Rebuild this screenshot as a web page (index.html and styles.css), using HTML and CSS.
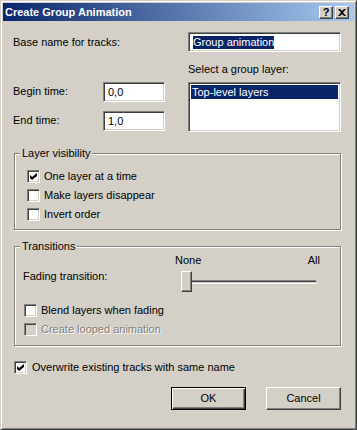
FILE: index.html
```html
<!DOCTYPE html>
<html lang="en">
<head>
  <meta charset="UTF-8">
  <title>Create Group Animation</title>
  <link rel="stylesheet" href="styles.css">
</head>
<body>
  <div class="window">
    <!-- Title bar -->
    <div class="titlebar">
      <span class="title">Create Group Animation</span>
      <div class="title-buttons">
        <span class="tbtn">?</span>
        <span class="tbtn">
          <svg width="8" height="7" viewBox="0 0 8 7"><path d="M0 0h2l2 2 2-2h2L5 3.5 8 7H6L4 5 2 7H0l3-3.5z" fill="#000"/></svg>
        </span>
      </div>
    </div>

    <div class="content">
      <!-- Track name -->
      <div class="name-row">
        <span>Base name for tracks:</span>
        <div class="edit wide"><span class="sel">Group animation</span></div>
      </div>

      <!-- Times and group layer -->
      <div class="middle">
        <div class="times">
          <div class="time-row">
            <span class="time-label">Begin time:</span>
            <div class="edit short">0,0</div>
          </div>
          <div class="time-row">
            <span class="time-label">End time:</span>
            <div class="edit short">1,0</div>
          </div>
        </div>
        <div class="layers">
          <div class="layers-label">Select a group layer:</div>
          <div class="listbox">
            <div class="list-item selected">Top-level layers</div>
          </div>
        </div>
      </div>

      <!-- Layer visibility -->
      <div class="group visibility">
        <span class="group-title">Layer visibility</span>
        <div class="check-row"><span class="check"><svg width="7" height="7" viewBox="0 0 7 7"><path d="M0 2l2 2 5-4v3L2 7 0 5z" fill="#000"/></svg></span>One layer at a time</div>
        <div class="check-row"><span class="check"></span>Make layers disappear</div>
        <div class="check-row"><span class="check"></span>Invert order</div>
      </div>

      <!-- Transitions -->
      <div class="group transitions">
        <span class="group-title">Transitions</span>
        <div class="fade">
          <span></span>
          <div class="scale"><span>None</span><span>All</span></div>
          <span class="fade-label">Fading transition:</span>
          <div class="slider">
            <span class="thumb"></span>
            <span class="track"></span>
          </div>
        </div>
        <div class="check-row first"><span class="check"></span>Blend layers when fading</div>
        <div class="check-row disabled"><span class="check"></span>Create looped animation</div>
      </div>

      <div class="check-row overwrite"><span class="check"><svg width="7" height="7" viewBox="0 0 7 7"><path d="M0 2l2 2 5-4v3L2 7 0 5z" fill="#000"/></svg></span>Overwrite existing tracks with same name</div>

      <div class="buttons">
        <span class="btn default">OK</span>
        <span class="btn">Cancel</span>
      </div>
    </div>
  </div>
</body>
</html>
```
FILE: styles.css
```css
body {
  margin: 0;
  font-family: "Liberation Sans", Arial, sans-serif;
  font-size: 11px;
  line-height: 13px;
  color: #000;
  background: #d4d0c8;
}
.window {
  width: 357px;
  height: 430px;
  box-sizing: border-box;
  background: #d4d0c8;
  border: 1px solid;
  border-color: #d4d0c8 #404040 #404040 #d4d0c8;
  box-shadow: inset 1px 1px #fff, inset -1px -1px #808080;
  padding: 2px;
}
.titlebar {
  height: 18px;
  display: flex;
  align-items: center;
  padding: 0 5px 0 2px;
  background: linear-gradient(to right, #0a246a, #a6caf0);
  color: #fff;
}
.title {
  flex: 1;
  font-weight: bold;
}
.title-buttons {
  display: flex;
  gap: 2px;
}
.tbtn {
  width: 14px;
  height: 13px;
  box-sizing: border-box;
  display: flex;
  align-items: center;
  justify-content: center;
  background: #d4d0c8;
  color: #000;
  font-weight: bold;
  font-size: 11px;
  border: 1px solid;
  border-color: #fff #404040 #404040 #fff;
  box-shadow: inset -1px -1px #808080;
}
.content {
  padding: 11px 13px 0 10px;
}
.name-row {
  display: flex;
  align-items: center;
  height: 20px;
}
.edit {
  height: 20px;
  box-sizing: border-box;
  display: flex;
  align-items: center;
  padding-left: 4px;
  background: #fff;
  border: 1px solid;
  border-color: #808080 #fff #fff #808080;
  box-shadow: inset 1px 1px #404040, inset -1px -1px #d4d0c8;
}
.edit.wide {
  width: 153px;
  margin-left: auto;
}
.edit.short {
  width: 62px;
}
.sel {
  background: #0a246a;
  color: #fff;
}
.middle {
  display: flex;
}
.times {
  flex: 1;
  padding-top: 30px;
  display: flex;
  flex-direction: column;
  gap: 9px;
}
.time-row {
  display: flex;
  align-items: center;
}
.time-label {
  width: 90px;
  margin-top: -2px;
}
.layers {
  width: 153px;
  padding-top: 11px;
}
.layers-label {
  margin-bottom: 6px;
}
.listbox {
  height: 50px;
  box-sizing: border-box;
  padding: 2px;
  background: #fff;
  border: 1px solid;
  border-color: #808080 #fff #fff #808080;
  box-shadow: inset 1px 1px #404040, inset -1px -1px #d4d0c8;
}
.list-item {
  height: 14px;
  line-height: 14px;
  padding-left: 1px;
}
.list-item.selected {
  background: #0a246a;
  color: #fff;
}
.group {
  margin: 21px 0 0 1px;
  border: 1px solid #808080;
  box-shadow: inset 1px 1px #fff, 1px 1px #fff;
}
.group-title {
  display: block;
  width: max-content;
  margin-top: -7px;
  padding: 0 2px;
  background: #d4d0c8;
}
.visibility {
  padding: 0 0 5px 12px;
}
.visibility .group-title {
  margin-left: -7px;
  margin-bottom: 7px;
}
.transitions {
  margin-top: 16px;
  padding: 0 0 6px 9px;
}
.transitions .group-title {
  margin-left: -4px;
}
.check-row {
  display: flex;
  align-items: center;
  gap: 4px;
  height: 19px;
}
.check {
  width: 13px;
  height: 13px;
  box-sizing: border-box;
  display: flex;
  align-items: center;
  justify-content: center;
  background: #fff;
  border: 1px solid;
  border-color: #808080 #fff #fff #808080;
  box-shadow: inset 1px 1px #404040, inset -1px -1px #d4d0c8;
}
.disabled {
  color: #808080;
  text-shadow: 1px 1px #fff;
}
.disabled .check {
  background: #d4d0c8;
}
.fade {
  display: grid;
  grid-template-columns: 151px 145px;
  row-gap: 4px;
  margin-top: 1px;
}
.fade-label {
  margin: -1px 0 0 -1px;
}
.scale {
  display: flex;
  justify-content: space-between;
}
.slider {
  display: flex;
  align-items: center;
  padding: 0 4px 0 6px;
}
.thumb {
  width: 11px;
  height: 21px;
  box-sizing: border-box;
  background: #d4d0c8;
  border: 1px solid;
  border-color: #fff #404040 #404040 #fff;
  box-shadow: inset -1px -1px #808080;
}
.track {
  flex: 1;
  height: 4px;
  box-sizing: border-box;
  border-top: 1px solid #808080;
  border-bottom: 1px solid #fff;
  box-shadow: inset 0 1px #404040;
}
.check-row.first {
  margin-top: 9px;
}
.overwrite {
  margin: 12px 0 0 1px;
  gap: 5px;
}
.buttons {
  display: flex;
  justify-content: flex-end;
  gap: 20px;
  margin-top: 10px;
}
.btn {
  width: 75px;
  height: 23px;
  box-sizing: border-box;
  display: flex;
  align-items: center;
  justify-content: center;
  background: #d4d0c8;
  border: 1px solid;
  border-color: #fff #404040 #404040 #fff;
  box-shadow: inset -1px -1px #808080;
}
.btn.default {
  border: 1px solid #000;
  box-shadow: inset 1px 1px #fff, inset -1px -1px #404040, inset -2px -2px #808080;
}
```
